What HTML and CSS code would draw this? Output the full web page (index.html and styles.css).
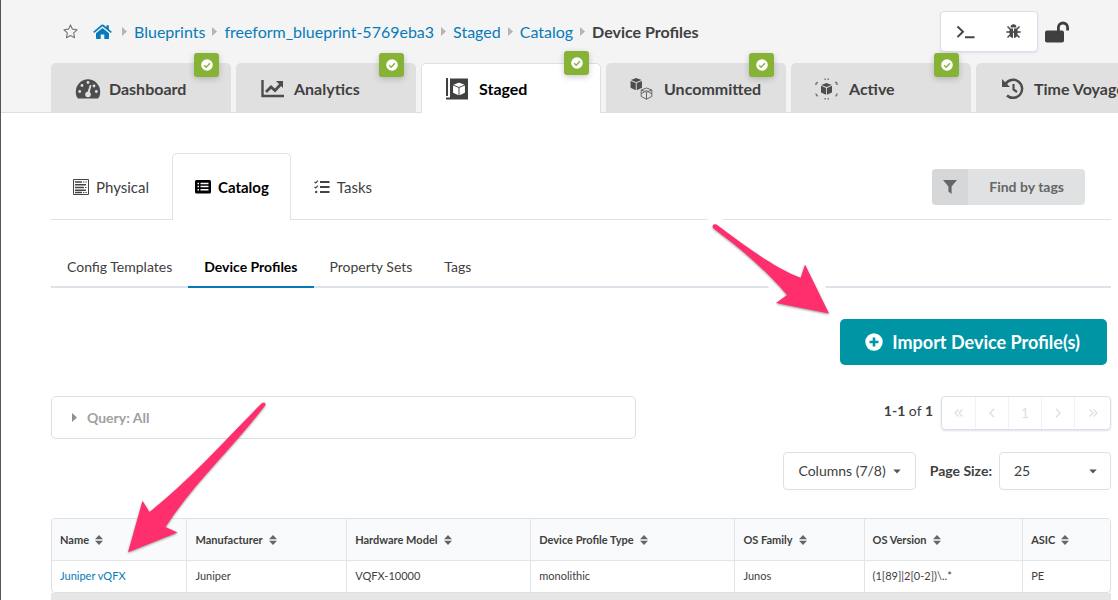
FILE: index.html
```html
<!DOCTYPE html>
<html lang="en">
<head>
<meta charset="utf-8">
<meta name="viewport" content="width=device-width, initial-scale=1">
<title>Device Profiles</title>
<link rel="stylesheet" href="styles.css">
</head>
<body>
<svg class="defs" aria-hidden="true">
  <symbol id="ok" viewBox="0 0 12 12"><circle cx="6" cy="6" r="5.8" fill="#fff"/><path d="M3.2 6.2 5.2 8.2 8.9 4.3" fill="none" stroke="#86b235" stroke-width="1.4"/></symbol>
  <symbol id="sort" viewBox="0 0 8 10"><path d="M4 0 8 4.200H0ZM0 5.800H8L4 10Z"/></symbol>
  <symbol id="caret" viewBox="0 0 8 5"><path d="M.3.4H7.700L4 4.600Z"/></symbol>
  <symbol id="arrow" viewBox="0 0 5 9"><path d="M0 0 5 4.500 0 9Z"/></symbol>
  <symbol id="cube" viewBox="0 0 14 14"><path d="M7 0 13 2.300 7 4.800 1 2.300ZM.6 3.300 6.500 5.700V13.600L.6 11ZM13.400 3.300 7.500 5.700V13.600L13.400 11Z"/></symbol>
</svg>
<header class="top">
  <div class="topbar">
    <nav class="crumbs" aria-label="Breadcrumb">
      <button class="star" aria-label="Favorite"><svg width="15" height="15" viewBox="0 0 16 16" fill="none" stroke="#777" stroke-width="1.200" stroke-linejoin="round"><path d="M8 1 10.100 5.500 15 6.100 11.400 9.500 12.300 14.600 8 12.200 3.700 14.600 4.600 9.500 1 6.100 5.900 5.500Z"/></svg></button>
      <a href="#" class="home" aria-label="Home"><svg width="19" height="16" viewBox="0 0 19 16" fill="#077bb9"><path d="M9.500 3.900 16 9.200V14.200Q16 15 15.200 15H11.300V10.400H7.700V15H3.800Q3 15 3 14.200V9.200Z"/><path d="M9.500.4Q10 .4 10.500.8L13.500 3.300V1.200H15.800V5.200L18.800 7.700 17.800 9 9.500 2.300 1.200 9 .2 7.700 8.500.8Q9 .4 9.500.4Z"/></svg></a>
      <svg class="sep" width="5" height="9"><use href="#arrow"/></svg><a href="#">Blueprints</a>
      <svg class="sep" width="5" height="9"><use href="#arrow"/></svg><a href="#">freeform_blueprint-5769eba3</a>
      <svg class="sep" width="5" height="9"><use href="#arrow"/></svg><a href="#">Staged</a>
      <svg class="sep" width="5" height="9"><use href="#arrow"/></svg><a href="#">Catalog</a>
      <svg class="sep" width="5" height="9"><use href="#arrow"/></svg><b>Device Profiles</b>
    </nav>
    <div class="tools">
      <div class="toolbox">
        <button aria-label="Terminal"><svg width="19" height="14" viewBox="0 0 19 14" fill="none" stroke="#444" stroke-width="1.900"><path d="M1.500 1.500 7 6.700 1.500 12M9 12.200H18.500"/></svg></button>
        <button aria-label="Bug report"><svg width="15" height="15" viewBox="0 0 15 15" fill="#4a4a4a"><path d="M4.500 3.500Q4.700.3 7.500.3T10.500 3.500ZM3.500 4.500H7V14Q3.500 13.500 3.500 10ZM8 4.500H11.500V10Q11.500 13.500 8 14Z"/><path d="M1.500 2.500 4 5M13.500 2.500 11 5M.3 8H14.700M4 11 1.500 13.500M11 11 13.500 13.500" fill="none" stroke="#4a4a4a" stroke-width="1.500"/></svg></button>
      </div>
      <button class="lock" aria-label="Unlocked"><svg width="24" height="22" viewBox="0 0 24 22"><rect y="9.500" width="19" height="12" rx="2" fill="#3f3f3f"/><path d="M13.400 10V6.600a4.600 4.600 0 0 1 9.200 0V9.500" fill="none" stroke="#3f3f3f" stroke-width="2.800"/></svg></button>
    </div>
  </div>
  <nav class="tabs" aria-label="Blueprint">
    <a href="#" class="tab"><svg width="26" height="22" viewBox="0 0 26 22"><path d="M3 20.500Q.8 18.500.8 13.500A12.200 12.200 0 0 1 25.200 13.500Q25.200 18.500 23 20.500Z" fill="#4d4d4d"/><g fill="#e0e0e0"><circle cx="4.700" cy="13.500" r="1.400"/><circle cx="7" cy="7.500" r="1.400"/><circle cx="13" cy="4.500" r="1.400"/><circle cx="19" cy="8" r="1.400"/><circle cx="21.300" cy="13.500" r="1.400"/><circle cx="13" cy="16.500" r="2.800"/><path d="M14.900 6.700 16.400 7.200 14.200 16.500 12 15.700Z"/></g></svg>Dashboard<span class="badge"><svg width="12" height="12"><use href="#ok"/></svg></span></a>
    <a href="#" class="tab"><svg width="26" height="22" viewBox="0 0 26 22" fill="none" stroke="#4d4d4d"><path d="M2.500 2V18H24" stroke-width="2.400"/><path d="M6 14 11 9 15 12.500 21 6" stroke-width="2.800"/><path d="M16 3H23V10Z" fill="#4d4d4d" stroke="none"/></svg>Analytics<span class="badge"><svg width="12" height="12"><use href="#ok"/></svg></span></a>
    <a href="#" class="tab current" aria-current="page"><svg width="26" height="22" viewBox="0 0 26 22"><path d="M5 .5H23V21.500H1V19.500H5Z" fill="#404040"/><path d="M2 0V18" stroke="#404040" stroke-width="2"/><use href="#cube" x="7.500" y="4.500" width="13" height="13" fill="#fff"/></svg>Staged<span class="badge"><svg width="12" height="12"><use href="#ok"/></svg></span></a>
    <a href="#" class="tab"><svg width="26" height="22" viewBox="0 0 26 22"><use href="#cube" x="0" y="0" width="12.500" height="12.500" fill="#4d4d4d"/><path d="M16.500 10 21.800 12V18.500L16.500 21.200 11.200 18.500V12ZM11.200 12 16.500 14.200 21.800 12M16.500 14.200V21.200M11.200 15.800 16.500 12.500 21.800 15.800" fill="none" stroke="#666"/></svg>Uncommitted<span class="badge"><svg width="12" height="12"><use href="#ok"/></svg></span></a>
    <a href="#" class="tab"><svg width="26" height="22" viewBox="0 0 26 22"><use href="#cube" x="5.500" y="5" width="12" height="12" fill="#4d4d4d"/><g fill="none" stroke="#777" stroke-width="1.500"><path d="M9.500 1.200H11M12.500 1.200H14M9.500 20.800H11M12.500 20.800H14M1 7V5.500Q1 4.500 3 4.500M20 4.500H21.500Q22 4.500 22 7M1 15.500Q1 17.500 3 18M22 15.500Q22 17.500 20.500 18"/></g></svg>Active<span class="badge"><svg width="12" height="12"><use href="#ok"/></svg></span></a>
    <a href="#" class="tab"><svg width="26" height="22" viewBox="0 0 26 22" fill="none" stroke="#4d4d4d"><path d="M5.500 6A9 9 0 1 1 7 17.500" stroke-width="2.500"/><path d="M2 1V9H10Z" fill="#4d4d4d" stroke="none"/><path d="M13.500 6V11.500L17 14" stroke-width="2.200"/></svg>Time Voyager</a>
  </nav>
</header>
<main class="content">
  <div class="subbar">
    <nav class="subtabs" aria-label="Staged">
      <a href="#" class="subtab"><svg width="16" height="16" viewBox="0 0 16 16" fill="none" stroke="#444"><path d="M.5.5H15.500V15.500H.5Z"/><path d="M2 3H9M2 8.500H11M2 5.800H13M2 11.200H13M2 13.500H9" stroke-width="1.600"/><path d="M10 3H14M12 8.500H14M10 13.500H14" stroke-dasharray="1 .6"/></svg>Physical</a>
      <a href="#" class="subtab current" aria-current="page"><svg width="16" height="14" viewBox="0 0 16 14"><rect width="16" height="13.500" rx="1.500" fill="#000"/><path d="M2.500 3.500H4M5.500 3.500H13.500M2.500 6.500H4M5.500 6.500H13.500M2.500 9.700H4M5.500 9.700H13.500" stroke="#fff" stroke-width="1.500"/></svg>Catalog</a>
      <a href="#" class="subtab"><svg width="16" height="14" viewBox="0 0 16 14" fill="none" stroke="#444"><path d="M6 2H15.500M6 7H15.500M6 12H15.500" stroke-width="2"/><path d="M.5 1.800 1.700 3 4 .6M.5 6.800 1.700 8 4 5.600" stroke-width="1.200"/><circle cx="2.200" cy="12" r="1.200" fill="#444" stroke="none"/></svg>Tasks</a>
    </nav>
    <button class="find"><span class="find-icon"><svg width="14" height="14" viewBox="0 0 14 14" fill="#666"><path d="M0 0H14L8.600 6.500V14L5.400 11.500V6.500Z"/></svg></span><span class="find-label">Find by tags</span></button>
  </div>
  <nav class="sections" aria-label="Catalog">
    <a href="#">Config Templates</a>
    <a href="#" class="current" aria-current="page">Device Profiles</a>
    <a href="#">Property Sets</a>
    <a href="#">Tags</a>
  </nav>
  <div class="actions">
    <button class="import"><svg width="18" height="18" viewBox="0 0 18 18"><circle cx="9" cy="9" r="8.700" fill="#fff"/><path d="M9 4.500V13.500M4.500 9H13.500" stroke="#0095a5" stroke-width="2.600"/></svg>Import Device Profile(s)</button>
  </div>
  <div class="filters">
    <button class="query"><svg width="5" height="9"><use href="#arrow"/></svg>Query: All</button>
    <div class="pager">
      <span><b>1-1</b> of <b>1</b></span>
      <div class="pages">
        <button disabled aria-label="First page"><svg width="10" height="8"><path d="M4.500.5 1 4 4.500 7.500M8.500.5 5 4 8.500 7.500"/></svg></button>
        <button disabled aria-label="Previous page"><svg width="6" height="10"><path d="M5 .8 1 5 5 9.200"/></svg></button>
        <button disabled>1</button>
        <button disabled aria-label="Next page"><svg width="6" height="10"><path d="M1 .8 5 5 1 9.200"/></svg></button>
        <button disabled aria-label="Last page"><svg width="10" height="8"><path d="M1.500.5 5 4 1.500 7.500M5.500.5 9 4 5.500 7.500"/></svg></button>
      </div>
    </div>
  </div>
  <div class="options">
    <button class="columns">Columns (7/8)<svg width="8" height="5"><use href="#caret"/></svg></button>
    <label for="size">Page Size:</label>
    <div class="size"><select id="size"><option>25</option></select><svg width="8" height="5"><use href="#caret"/></svg></div>
  </div>
  <div class="tablebox">
    <table>
      <colgroup><col class="c-name"><col class="c-maker"><col class="c-model"><col class="c-type"><col class="c-family"><col class="c-version"><col></colgroup>
      <thead><tr>
        <th><button>Name<svg width="8" height="10"><use href="#sort"/></svg></button></th>
        <th><button>Manufacturer<svg width="8" height="10"><use href="#sort"/></svg></button></th>
        <th><button>Hardware Model<svg width="8" height="10"><use href="#sort"/></svg></button></th>
        <th><button>Device Profile Type<svg width="8" height="10"><use href="#sort"/></svg></button></th>
        <th><button>OS Family<svg width="8" height="10"><use href="#sort"/></svg></button></th>
        <th><button>OS Version<svg width="8" height="10"><use href="#sort"/></svg></button></th>
        <th><button>ASIC<svg width="8" height="10"><use href="#sort"/></svg></button></th>
      </tr></thead>
      <tbody><tr><td><a href="#">Juniper vQFX</a></td><td>Juniper</td><td>VQFX-10000</td><td>monolithic</td><td>Junos</td><td>(1[89]|2[0-2])\..*</td><td>PE</td></tr></tbody>
    </table>
  </div>
  <div class="track"></div>
</main>
<svg class="marks" width="1118" height="600" viewBox="0 0 1118 600" aria-hidden="true">
  <path class="halo" d="M716 225C745 246 775 268 800.700 277.700L805 264.500 829 313.500 776 303 787 295C766 270 741 249 714 228Q712 225 716 225Z"/>
  <g class="pointer">
    <path d="M716.500 224.500C745 246 775 268 800.700 277.700L805 264.500 829 313.500 776 303 787 295C766 270 741 249 713 228Q711.500 223.500 716.500 224.500Z"/>
    <path d="M128 552.300 142.500 500.700 149.500 512C190 480 225 440 261.500 403.500Q265.500 401 265.500 405C232 449 194 483 165.500 527L177.500 532.500Z"/>
  </g>
</svg>
</body>
</html>
```
FILE: styles.css
```css
* { box-sizing: border-box; }
html { height: 100%; overflow: hidden; }
body {
  margin: 0;
  min-height: 100%;
  border-left: 1px solid #555;
  background: #fff;
  color: #404040;
  font: 14px/20px Lato, "Liberation Sans", sans-serif;
}
button, select { font: inherit; color: inherit; background: none; border: 0; padding: 0; margin: 0; }
a { color: inherit; text-decoration: none; }
svg { display: block; flex: none; }
.defs { position: absolute; width: 0; height: 0; }

.top { background: #f4f4f4; border-bottom: 1px solid #dcdfea; padding-top: 11px; }
.topbar { display: flex; justify-content: space-between; padding: 0 49px 0 62px; margin-bottom: 11px; }
.crumbs { display: flex; align-items: center; font-size: 16px; white-space: nowrap; }
.crumbs a { color: #077bb9; }
.home { margin: 0 10px 0 15px; }
.sep { fill: #b5b5b5; margin: 0 7px; }
.home + .sep { margin-left: 0; }
.tools { display: flex; align-items: center; gap: 7px; }
.toolbox { display: flex; height: 41px; background: #fff; border: 1px solid #dcdfea; border-radius: 4px; box-shadow: 0 1px 2px #dcdfea; }
.toolbox button { width: 48px; display: grid; place-items: center; }

.tabs { display: flex; gap: 5px; padding-left: 50px; margin-bottom: -1px; overflow-x: clip; }
.tab {
  position: relative;
  flex: none;
  width: 180px;
  height: 49px;
  margin-bottom: 1px;
  display: flex;
  align-items: center;
  gap: 8px;
  padding: 3px 0 0 24px;
  background: #e0e0e0;
  border-radius: 5px 5px 0 0;
  font-size: 16px;
  font-weight: bold;
  white-space: nowrap;
}
.tab.current { background: #fff; color: #000; border: 1px solid #dcdfea; border-bottom: 0; height: 50px; margin-bottom: 0; padding: 1px 0 0 23px; }
.badge {
  position: absolute;
  top: -10px;
  right: 12px;
  width: 25px;
  height: 24px;
  display: grid;
  place-items: center;
  background: #86b235;
  border-radius: 3px;
  box-shadow: 0 2px 6px #0003;
}
.current .badge { top: -13px; right: 11px; }

.content { padding: 40px 7px 0 50px; }
.subbar { display: flex; justify-content: space-between; align-items: flex-start; border-bottom: 1px solid #dee2e9; padding-right: 26px; }
.subtabs { display: flex; margin-bottom: -1px; }
.subtab { display: flex; align-items: center; gap: 7px; height: 67px; padding: 0 22px 1px; border: 1px solid transparent; border-bottom: 0; font-size: 15px; }
.subtab:first-child { border-left: 0; }
.subtab.current { padding-right: 21px; background: #fff; border-color: #dee2e9; border-radius: 5px 5px 0 0; color: #000; font-weight: bold; }
.find { display: flex; height: 36px; margin-top: 16px; border-radius: 4px; overflow: hidden; background: #e0e1e2; color: #666; font-weight: bold; }
.find-icon { width: 36px; height: 36px; display: grid; place-items: center; background: #d6d7d8; }
.find-label { line-height: 36px; padding: 0 21px; }

.sections { display: flex; margin-top: 26px; border-bottom: 2px solid #dee2e9; }
.sections a { padding: 11px 16px 9px; margin-bottom: -2px; border-bottom: 2px solid transparent; }
.sections a.current { color: #000; font-weight: bold; border-color: #077bb9; }

.actions { display: flex; justify-content: flex-end; padding-right: 4px; margin-top: 31px; }
.import { display: flex; align-items: center; gap: 9px; height: 46px; padding: 0 27px 0 25px; border-radius: 5px; background: #0095a5; color: #fff; font-size: 18px; font-weight: bold; }

.filters { display: flex; justify-content: space-between; margin-top: 31px; }
.query { flex: 0 0 55.2%; display: flex; align-items: center; gap: 10px; height: 43px; padding: 0 20px; border: 1px solid #dcdfea; border-radius: 5px; color: #a0a0a0; font-weight: bold; }
.query svg { fill: #909090; }
.pager { display: flex; align-items: flex-start; gap: 8px; line-height: 30px; }
.pages { display: flex; height: 34px; border: 1px solid #dcdfea; border-radius: 4px; box-shadow: 0 1px 2px #dcdfea; }
.pages button { width: 33px; display: grid; place-items: center; color: #dedede; font-size: 13px; border-right: 1px solid #f2f2f4; }
.pages button:first-child { width: 34px; }
.pages button:last-child { width: 35px; border-right: 0; }
.pages svg { fill: none; stroke: #dedede; stroke-width: 1.3; }

.options { display: flex; justify-content: flex-end; align-items: center; margin-top: 13px; }
.options svg { fill: #555; }
.columns { display: flex; align-items: center; gap: 7px; height: 38px; padding: 0 14px; border: 1px solid #dcdfea; border-radius: 4px; }
.options label { font-weight: bold; margin: 0 7px 0 14px; }
.size { position: relative; width: 112px; }
.size select { appearance: none; width: 100%; height: 38px; padding: 0 14px; border: 1px solid #dcdfea; border-radius: 4px; background: #fff; }
.size svg { position: absolute; right: 14px; top: 17px; pointer-events: none; }

.tablebox { margin-top: 28px; border: 1px solid #dcdfea; border-radius: 4px; overflow: hidden; }
table { width: 100%; table-layout: fixed; border-collapse: separate; border-spacing: 0; font-size: 11px; line-height: 16px; }
th, td { padding: 0 8px; text-align: left; border-right: 1px solid #e3e4e8; }
th:last-child, td:last-child { border-right: 0; }
th { height: 42px; background: #f9fafb; border-bottom: 1px solid #e3e4e8; }
th button { display: flex; align-items: center; gap: 6px; font-weight: bold; white-space: nowrap; }
th svg { fill: #666; }
td { height: 31px; padding-bottom: 1px; }
td a { color: #077bb9; }
.c-name { width: 12.8%; }
.c-maker { width: 15.1%; }
.c-model { width: 17.4%; }
.c-type { width: 19.3%; }
.c-family { width: 12.2%; }
.c-version { width: 15%; }
.track { height: 12px; background: #e6e6e6; }

.marks { position: absolute; left: 0; top: 0; pointer-events: none; }
.halo { fill: #fff; stroke: #fff; stroke-width: 17; stroke-linejoin: round; }
.pointer { fill: #ff2e6c; filter: drop-shadow(0 1px 1px #0006); }
```
